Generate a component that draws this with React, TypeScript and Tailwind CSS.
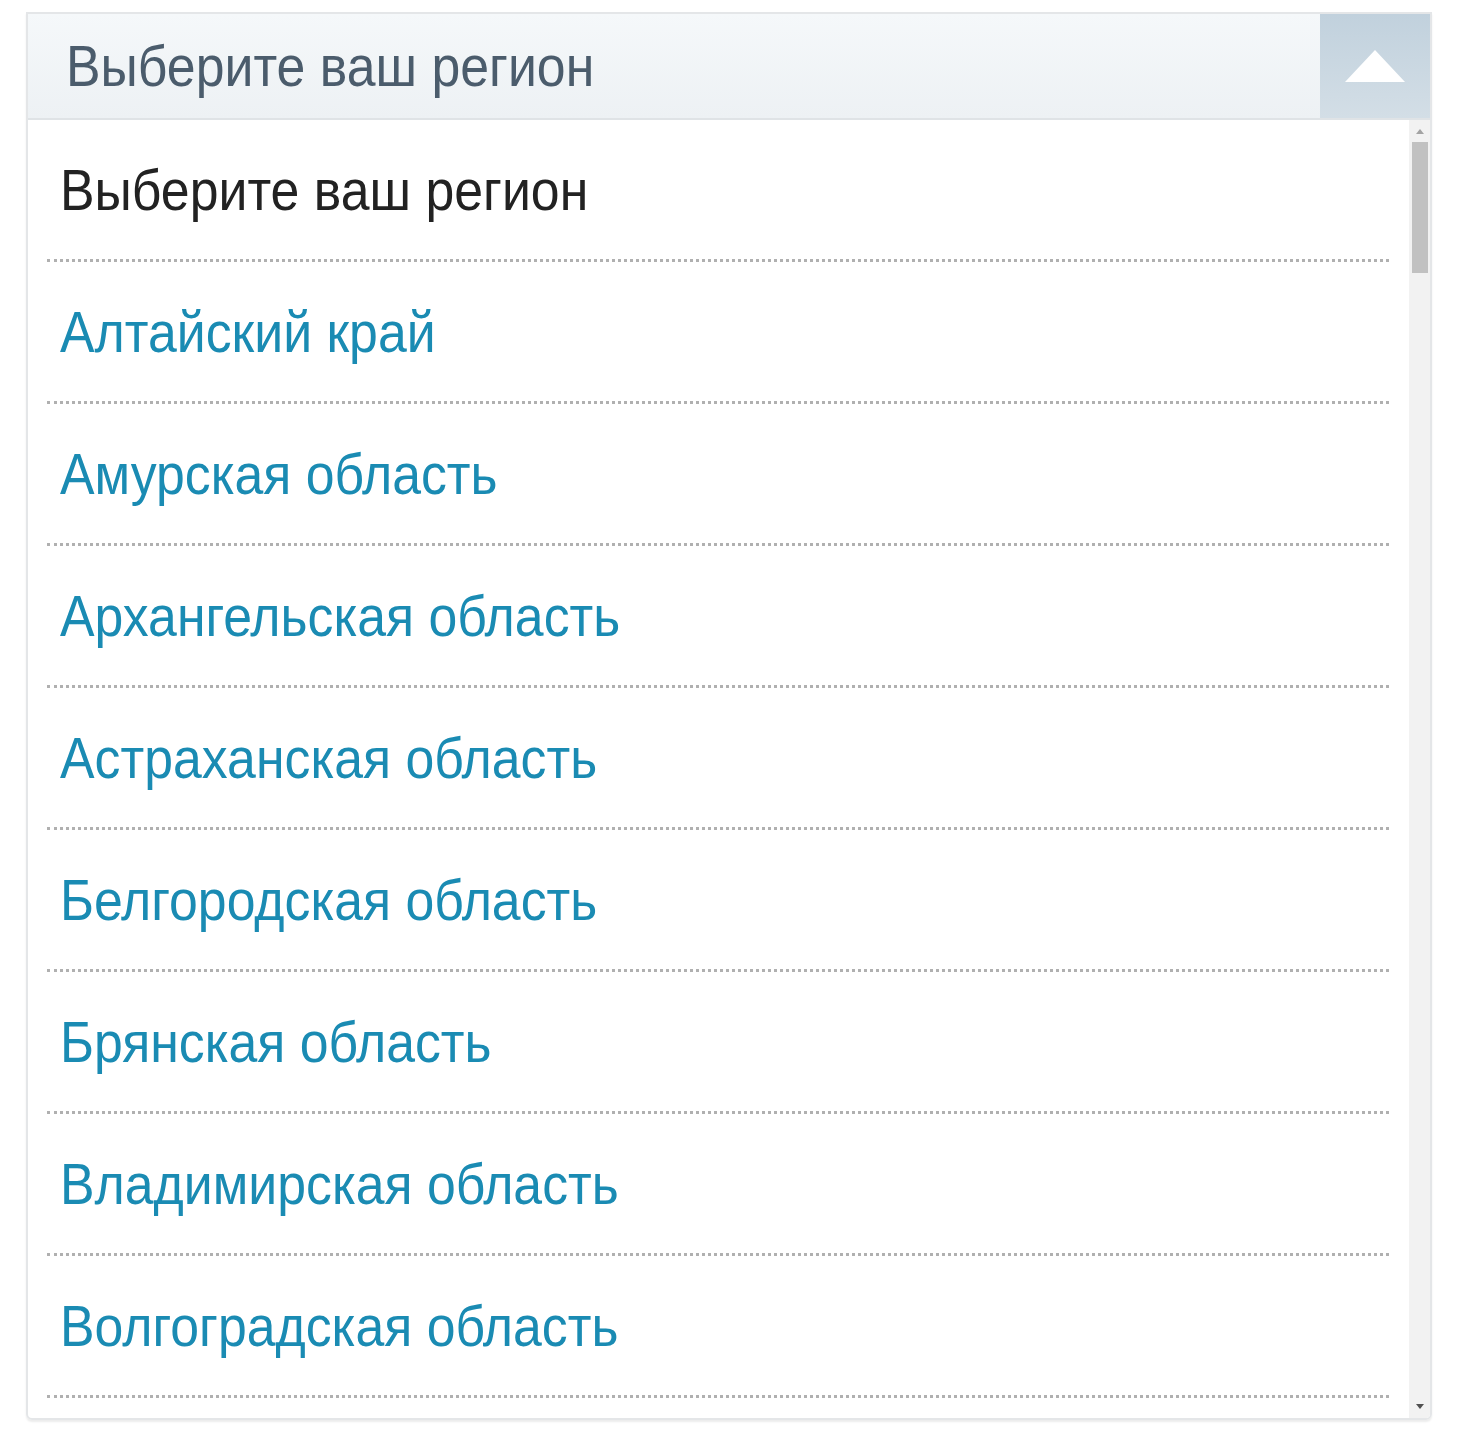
import React from "react";

const regions = [
  "Алтайский край",
  "Амурская область",
  "Архангельская область",
  "Астраханская область",
  "Белгородская область",
  "Брянская область",
  "Владимирская область",
  "Волгоградская область",
];

// Reference type is slightly condensed, so the labels are narrowed horizontally
const Label = ({ children }: { children: React.ReactNode }) => (
  <span className="inline-block origin-left scale-x-[0.893] whitespace-nowrap">{children}</span>
);

export default function App() {
  return (
    <div className="min-h-[1438px] bg-white pt-[12px] pl-[26px] font-['Liberation_Sans',Arial,sans-serif]">
      <div className="w-[1406px] border-2 border-[#e4e6e8] rounded-b-[6px] shadow-[0_2px_2px_rgba(0,0,0,0.08)] overflow-hidden">
        {/* Header */}
        <div className="flex h-[106px] border-b-2 border-[#dfe3e6] bg-gradient-to-b from-[#f5f8fa] to-[#edf1f4]">
          <div className="flex-1 flex items-center pl-[38px] text-[58px] text-[#4b5c6c] leading-none">
            <Label>Выберите ваш регион</Label>
          </div>
          <div className="w-[110px] flex items-center justify-center bg-gradient-to-b from-[#c1d1dd] to-[#d3dee6]">
            <svg width="62" height="34" viewBox="0 0 62 34">
              <polygon points="31,1 61,33 1,33" fill="#ffffff" />
            </svg>
          </div>
        </div>

        {/* List */}
        <div className="flex h-[1298px]">
          <div className="flex-1 overflow-hidden pl-[19px] pr-[20px]">
            <div className="h-[142px] flex items-center pl-[13px] border-b-[3px] border-dotted border-[#b0b0b0] text-[58px] text-[#222222] leading-none">
              <Label>Выберите ваш регион</Label>
            </div>
            {regions.map((r) => (
              <div
                key={r}
                className="h-[142px] shrink-0 flex items-center pl-[13px] border-b-[3px] border-dotted border-[#b0b0b0] text-[58px] text-[#1a8bb3] leading-none"
              >
                <Label>{r}</Label>
              </div>
            ))}
          </div>
          {/* Scrollbar */}
          <div className="w-[21px] bg-[#f2f2f2] flex flex-col items-center">
            <div className="h-[22px] flex items-center justify-center">
              <svg width="8" height="5" viewBox="0 0 8 5">
                <polygon points="4,0 8,5 0,5" fill="#a3a3a3" />
              </svg>
            </div>
            <div className="w-[16px] h-[131px] bg-[#c1c1c1]" />
            <div className="flex-1" />
            <div className="h-[24px] flex items-center justify-center">
              <svg width="8" height="5" viewBox="0 0 8 5">
                <polygon points="0,0 8,0 4,5" fill="#505050" />
              </svg>
            </div>
          </div>
        </div>
      </div>
    </div>
  );
}
